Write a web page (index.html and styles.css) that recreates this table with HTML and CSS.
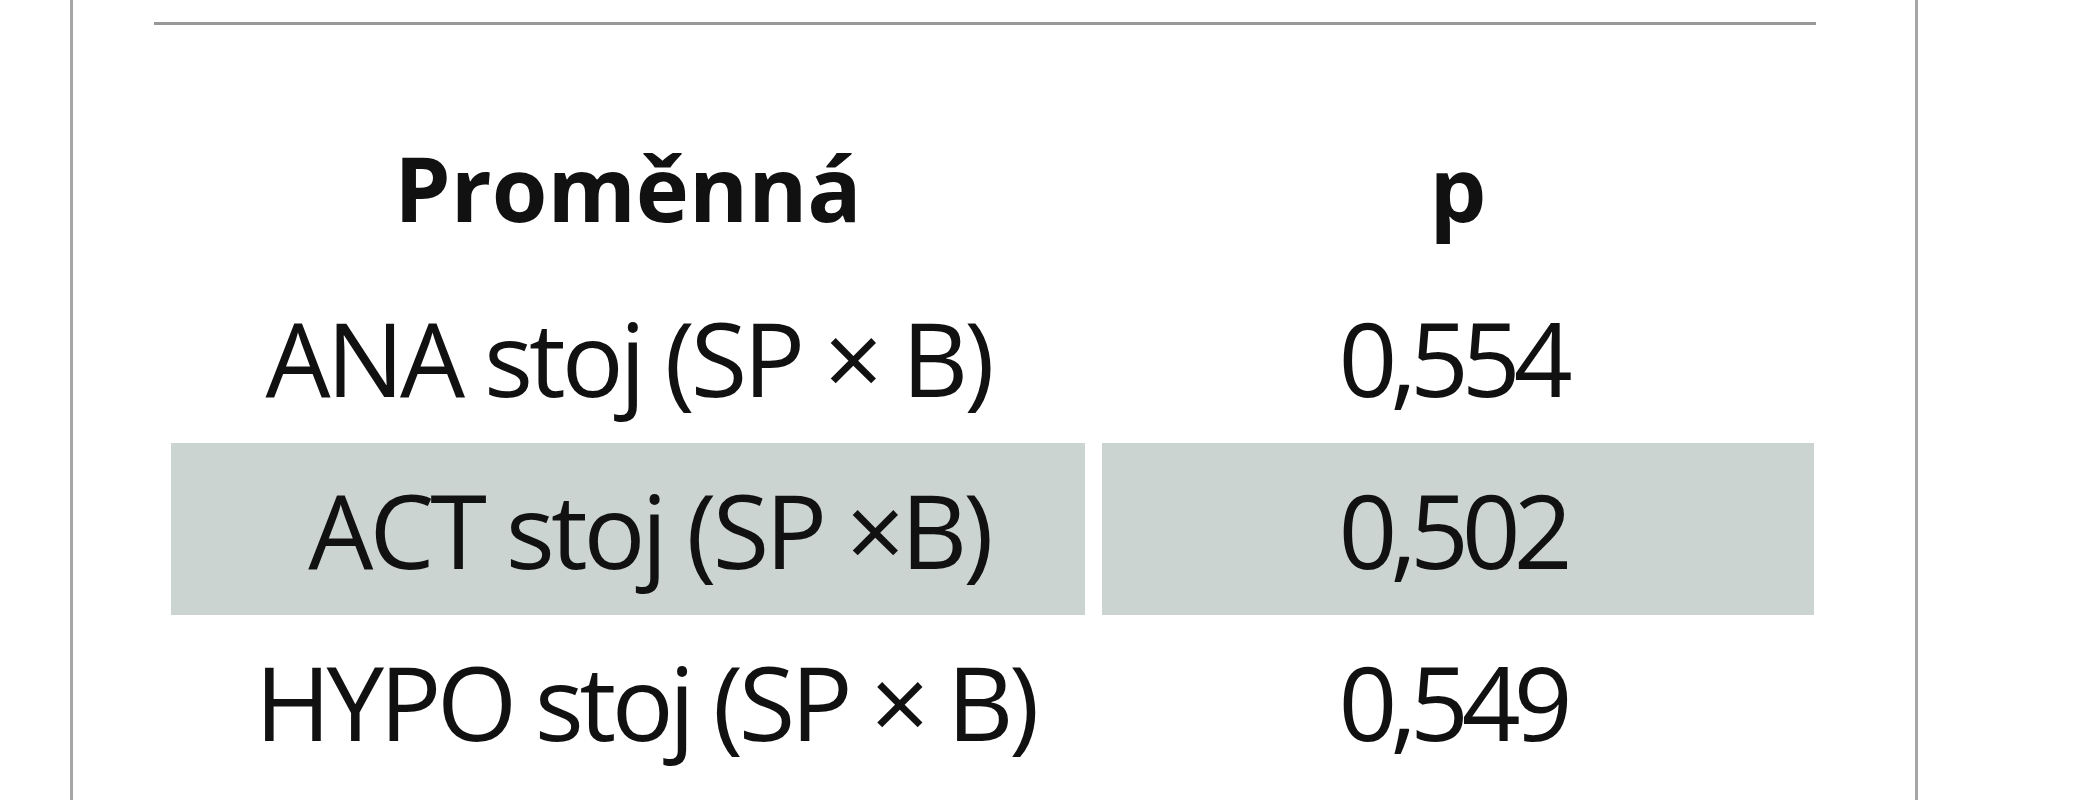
FILE: index.html
```html
<!DOCTYPE html>
<html lang="cs">
<head>
<meta charset="utf-8">
<title>Tabulka</title>
<link rel="stylesheet" href="styles.css">
</head>
<body>
<div class="frame">
  <div class="rule"></div>
  <div class="table">
    <div class="cell head">Proměnná</div>
    <div class="cell head">p</div>
    <div class="cell">ANA stoj (SP × B)</div>
    <div class="cell num">0,554</div>
    <div class="cell shade shift">ACT stoj (SP ×B)</div>
    <div class="cell shade num">0,502</div>
    <div class="cell shift-sm">HYPO stoj (SP × B)</div>
    <div class="cell num">0,549</div>
  </div>
</div>
</body>
</html>
```
FILE: styles.css
```css
html, body {
  margin: 0;
  padding: 0;
  background: #ffffff;
  overflow: hidden;
}

body {
  font-family: "Open Sans", "Noto Sans", sans-serif;
  color: #111111;
}

.frame {
  box-sizing: border-box;
  margin-left: 70px;
  width: 1848px;
  height: 800px;
  border-left: 3px solid #a6a6a6;
  border-right: 3px solid #a6a6a6;
  padding-top: 22px;
}

.rule {
  margin-left: 81px;
  width: 1662px;
  height: 3px;
  background: #989898;
}

.table {
  margin-top: 78px;
  margin-left: 98px;
  display: grid;
  grid-template-columns: 914px 712px;
  column-gap: 17px;
}

.cell {
  height: 172px;
  line-height: 172px;
  font-size: 103px;
  letter-spacing: -4px;
  text-align: center;
  white-space: nowrap;
}

.cell.head {
  height: 168px;
  line-height: 168px;
  font-size: 90px;
  font-weight: 700;
  letter-spacing: 0;
}

.cell.num {
  letter-spacing: -7px;
  padding-right: 12px;
}

.cell.shift {
  padding-left: 42px;
}

.cell.shift-sm {
  padding-left: 34px;
  letter-spacing: -4.5px;
}

.cell.shade {
  background: #ccd4d1;
}
```
